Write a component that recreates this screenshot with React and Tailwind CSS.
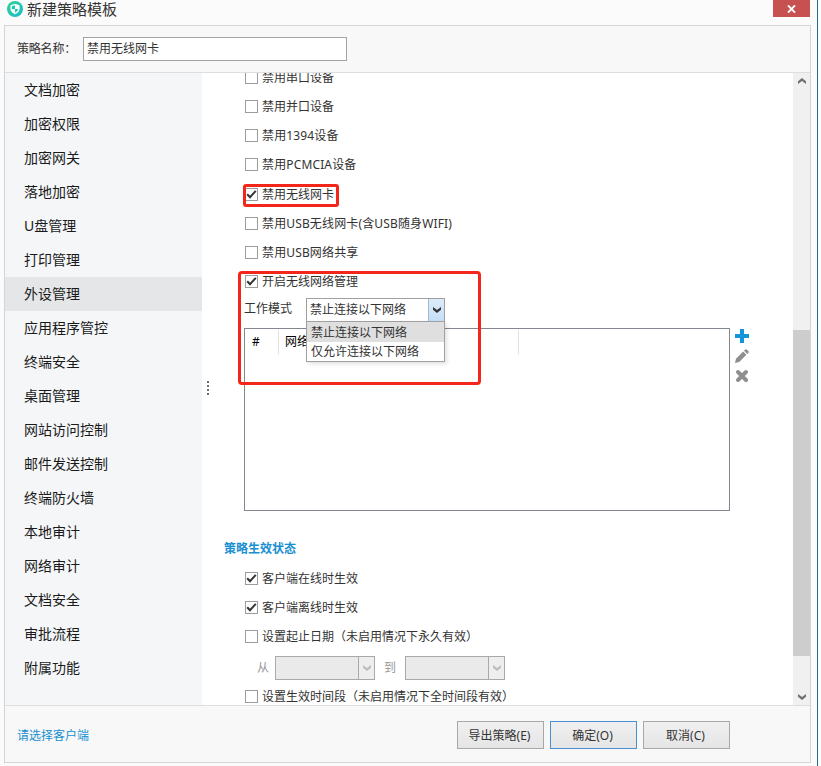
const NAV = [
  '文档加密', '加密权限', '加密网关', '落地加密', 'U盘管理', '打印管理',
  '外设管理', '应用程序管控', '终端安全', '桌面管理', '网站访问控制',
  '邮件发送控制', '终端防火墙', '本地审计', '网络审计', '文档安全',
  '审批流程', '附属功能',
];

function Check({ label, checked, wide }) {
  return (
    <div className="flex h-[29px] shrink-0 items-center gap-[4px]">
      <span className="flex h-[13px] w-[13px] items-center justify-center border border-[#9c9c9c] bg-white">
        {checked && (
          <svg width="11" height="11" viewBox="0 0 11 11" className="shrink-0">
            <path d="M1.2 5.2 L4 8.2 L9.8 1.8" fill="none" stroke="#333" strokeWidth="2" />
          </svg>
        )}
      </span>
      <span className={`leading-4 whitespace-nowrap ${wide ? 'tracking-[0.14px]' : ''}`}>{label}</span>
    </div>
  );
}

function Chevron({ color, up }) {
  return (
    <svg width="8" height="6" viewBox="0 0 8 6" className={up ? 'rotate-180' : ''}>
      <path d="M0 0 L4 3 L8 0 V2.8 L4 6 L0 2.8 Z" fill={color} />
    </svg>
  );
}

function DateBox() {
  return (
    <div className="flex h-6 w-[100px] border border-[#a9a9a9] bg-[#eaeaea]">
      <div className="flex-1" />
      <div className="flex w-4 items-center justify-center border-l border-[#a9a9a9] bg-[#eeeeee]">
        <Chevron color="#bcbcbc" />
      </div>
    </div>
  );
}

function Button({ label, primary }) {
  return (
    <button
      className={`h-7 w-[87px] border bg-linear-to-b from-[#f0f0f0] to-[#e5e5e5] pt-[2px] pr-[2px] text-[12px] leading-4 ${
        primary ? 'border-[#4a90d0]' : 'border-[#a8a8a8]'
      }`}
    >
      {label}
    </button>
  );
}

function WirelessPanel() {
  return (
    <div className="relative">
      <div className="pl-px">
        <Check label="开启无线网络管理" checked />
      </div>
      <div className="mt-[2px] flex h-6 items-center">
        <span className="-mt-[3px] w-[62px] leading-4">工作模式</span>
        <div className="relative flex h-6 w-[139px] border border-[#a0a0a0] bg-white">
          <span className="flex-1 pl-[3px] leading-[22px]">禁止连接以下网络</span>
          <div className="flex w-4 items-center justify-center border-l border-[#9fb9d0] bg-linear-to-b from-[#dcebfa] to-[#c5dff8]">
            <Chevron color="#333" />
          </div>
          <div className="absolute -left-px top-[22px] z-10 h-[41px] w-[139px] border border-[#a0a0a0] bg-white shadow-[2px_2px_4px_rgba(0,0,0,0.12)]">
            <div className="h-5 bg-[#dfdfdf] pl-1 leading-[21px]">禁止连接以下网络</div>
            <div className="h-[19px] pl-1 leading-[19px]">仅允许连接以下网络</div>
          </div>
        </div>
      </div>
      <div className="mt-[6px] flex">
        <div className="h-[183px] w-[486px] border border-[#828790] bg-white text-black">
          <div className="mt-px flex h-6 leading-6">
            <div className="w-[34px] border-r border-[#e2e2e2] pl-[7px]">#</div>
            <div className="w-[240px] border-r border-[#e2e2e2] pl-[6px]">网络</div>
          </div>
        </div>
        <div className="ml-[5px] flex flex-col gap-[6px] pt-px">
          <svg width="14" height="14" viewBox="0 0 14 14">
            <path d="M5 0H9V5H14V9H9V14H5V9H0V5H5Z" fill="#1296db" />
          </svg>
          <svg width="14" height="14" viewBox="0 0 14 14">
            <path d="M0 14 L1 9.8 L8.2 2.6 L11.4 5.8 L4.2 13 Z M9 1.8 L10.3 .5 Q11 -.1 11.7 .5 L13.5 2.3 Q14.1 3 13.5 3.7 L12.2 5 Z" fill="#8f8f8f" />
          </svg>
          <svg width="14" height="14" viewBox="0 0 14 14">
            <path d="M3 3 L11 11 M11 3 L3 11" stroke="#8f8f8f" strokeWidth="4" strokeLinecap="round" />
          </svg>
        </div>
      </div>
      <div className="absolute left-[-6px] top-[4px] z-20 h-[114px] w-[243px] rounded-[4px] border-3 border-[#f32719]" />
    </div>
  );
}

export default function App() {
  return (
    <div className="flex h-[766px] w-[821px] overflow-hidden bg-white font-['Noto_Sans','Noto_Sans_CJK_SC',sans-serif] text-[12px] text-[#333]">
      <div className="flex h-[766px] w-[818px] flex-col border-r border-[#1b6c93] bg-[#fbfbfb]">
        <div className="flex h-[25px] shrink-0 items-start pl-[7px] pr-[7px]">
          <svg width="16" height="16" viewBox="0 0 16 16" className="mt-px">
            <defs>
              <linearGradient id="logo" x1="0" y1="0" x2="1" y2="1">
                <stop offset="0" stopColor="#2fd08c" />
                <stop offset="1" stopColor="#19bdd2" />
              </linearGradient>
            </defs>
            <circle cx="8" cy="8" r="8" fill="url(#logo)" />
            <path d="M8 2.7 L12.6 4.2 V8 Q12.3 11.5 8 13.3 Q3.7 11.5 3.4 8 V4.2 Z" fill="#f4fffc" />
            <path d="M8 4.3 V8 H4.8 V5.3 Z M8 8 H11.2 Q10.8 10.5 8 11.7 Z" fill="#22c7af" />
          </svg>
          <div className="-mt-px ml-[4px] flex-1 text-[15px] leading-[20px]">新建策略模板</div>
          <div className="flex h-[17px] w-[37px] items-center justify-center bg-[#c75050]">
            <svg width="9" height="8" viewBox="0 0 9 8">
              <path d="M1 .4 L8 7.6 M8 .4 L1 7.6" stroke="#fff" strokeWidth="1.9" />
            </svg>
          </div>
        </div>

        <div className="ml-1 flex h-[738px] w-[807px] shrink-0 flex-col border border-[#d3d5d5] bg-[#f8f8f8]">
          <div className="flex h-[47px] shrink-0 items-center border-b border-[#dedede] pl-3">
            <span className="w-[66px] leading-4 tracking-[-0.2px] whitespace-nowrap">策略名称：</span>
            <div className="h-6 w-[264px] border border-[#a3a3a3] bg-white pl-[3px] leading-[21px]">禁用无线网卡</div>
          </div>

          <div className="flex h-[632px] shrink-0 overflow-hidden bg-white">
            <nav className="w-[197px] shrink-0 bg-[#f4f6f8] text-[14px] text-[#1a1a1a]">
              {NAV.map((n) => (
                <div key={n} className={`h-[34px] pl-[19px] leading-[34px] ${n === '外设管理' ? 'bg-[#e4e6e8]' : ''}`}>
                  {n}
                </div>
              ))}
            </nav>
            <div className="flex w-[12px] shrink-0 flex-col items-center gap-[2px] pt-[308px]">
              {[0, 1, 2, 3].map((i) => (
                <span key={i} className="h-[2px] w-[2px] bg-[#6f6f6f]" />
              ))}
            </div>
            <div className="flex-1 overflow-hidden">
              <div className="-mt-[10px] flex flex-col pl-[31px]">
                <Check label="禁用串口设备" />
                <Check label="禁用并口设备" />
                <Check label="禁用1394设备" wide />
                <Check label="禁用PCMCIA设备" wide />
                <div className="relative mt-px">
                  <Check label="禁用无线网卡" checked />
                  <div className="absolute left-[-2px] top-[4px] h-[23px] w-[96px] rounded-[3px] border-3 border-[#f32719]" />
                </div>
                <Check label="禁用USB无线网卡(含USB随身WIFI)" wide />
                <Check label="禁用USB网络共享" wide />
                <div className="-ml-px">
                  <WirelessPanel />
                </div>
                <div className="-ml-[21px] mt-[29px] h-[18px] font-bold leading-[18px] text-[#1a8fd0]">策略生效状态</div>
                <div className="mt-[6px]">
                  <Check label="客户端在线时生效" checked />
                  <Check label="客户端离线时生效" checked />
                  <Check label="设置起止日期（未启用情况下永久有效）" />
                </div>
                <div className="mt-[5px] flex h-6 items-center text-[#999]">
                  <span className="ml-3 w-[18px] leading-4">从</span>
                  <DateBox />
                  <span className="ml-[9px] w-[21px] leading-4">到</span>
                  <DateBox />
                </div>
                <div className="mt-[2px]">
                  <Check label="设置生效时间段（未启用情况下全时间段有效）" />
                </div>
              </div>
            </div>
            <div className="flex w-[17px] shrink-0 flex-col items-center bg-[#f0f0f0]">
              <div className="flex h-[257px] pt-[5px]">
                <Chevron color="#707070" up />
              </div>
              <div className="h-[326px] w-[17px] bg-[#cdcdcd]" />
              <div className="flex flex-1 items-end pb-[5px]">
                <Chevron color="#707070" />
              </div>
            </div>
          </div>

          <div className="flex flex-1 items-center border-t border-[#dedede] pl-3 pr-[80px] pt-[2px]">
            <span className="flex-1 pt-px leading-4 text-[#1a8fd0]">请选择客户端</span>
            <div className="flex gap-[6px]">
              <Button label="导出策略(E)" />
              <Button label="确定(O)" primary />
              <Button label="取消(C)" />
            </div>
          </div>
        </div>
      </div>
    </div>
  );
}
